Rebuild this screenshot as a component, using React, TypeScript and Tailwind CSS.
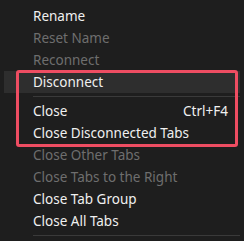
const items = [
  { label: "Rename" },
  { label: "Reset Name", disabled: true },
  { label: "Reconnect", disabled: true },
  { label: "Disconnect", hover: true },
  { sep: true },
  { label: "Close", shortcut: "Ctrl+F4" },
  { label: "Close Disconnected Tabs" },
  { label: "Close Other Tabs", disabled: true },
  { label: "Close Tabs to the Right", disabled: true },
  { label: "Close Tab Group" },
  { label: "Close All Tabs" },
  { sep: true },
]

type Item = {
  label?: string
  shortcut?: string
  disabled?: boolean
  hover?: boolean
  sep?: boolean
}

export default function App() {
  return (
    <div
      className="relative w-[244px] h-[241px] overflow-hidden bg-[#1e1e1e] px-1 pt-[5px]"
      style={{ fontFamily: '"Noto Sans", "Open Sans", sans-serif' }}
    >
      {(items as Item[]).map((item, i) =>
        item.sep ? (
          <div key={i} className="flex h-[7px] items-center pl-[29px]">
            <div className="h-px w-full bg-[#3a3a3a]" />
          </div>
        ) : (
          <div
            key={i}
            className={
              "flex h-[22px] items-center justify-between pl-[29px] pr-[12px] text-[13.5px] " +
              (item.hover ? "bg-[#2e2e2e] " : "") +
              (item.disabled ? "text-[#6e6e6e]" : "text-[#f0f0f0]")
            }
          >
            <span>{item.label}</span>
            {item.shortcut && <span>{item.shortcut}</span>}
          </div>
        )
      )}

      {/* highlight annotation */}
      <div className="pointer-events-none absolute left-[16px] top-[70px] h-[77px] w-[222px] rounded-[3px] border-[3px] border-[#ee4d62]" />
    </div>
  )
}
